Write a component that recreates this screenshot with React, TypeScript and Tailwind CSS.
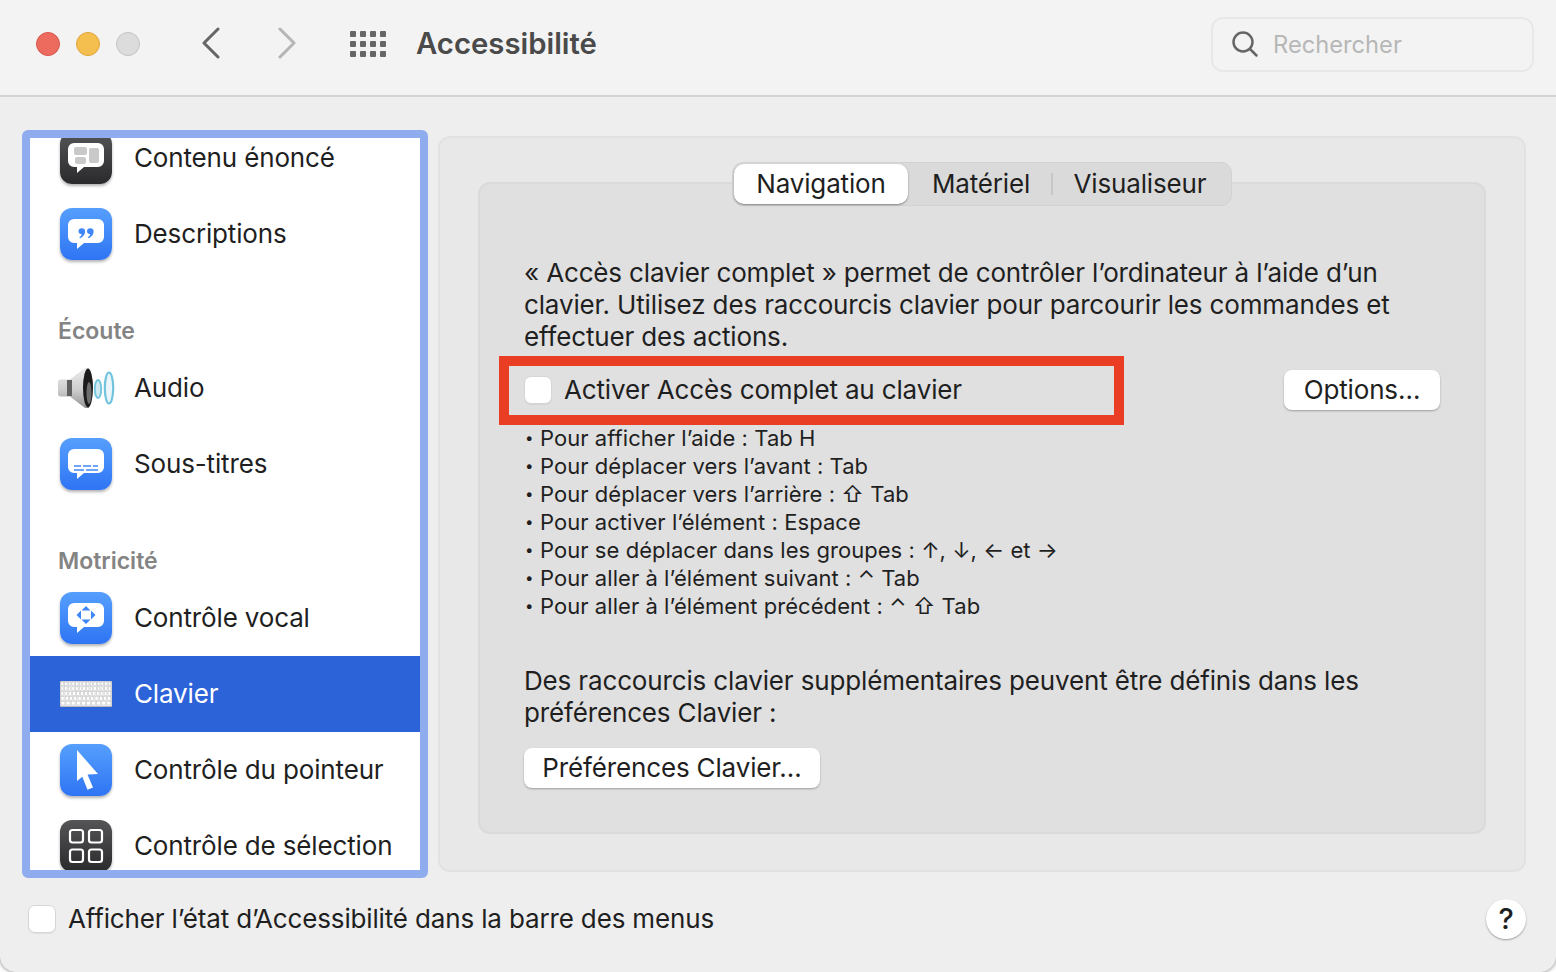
import React from 'react';

const bubble = 'M14 11h24a6 6 0 0 1 6 6v12a6 6 0 0 1-6 6H24l-7 6v-6h-3a6 6 0 0 1-6-6V17a6 6 0 0 1 6-6z';
const quote = 'M18.500 23.500a3.300 3.300 0 1 1 6.600 0c0 3-2 5.500-5 6.700l-.8-1c1.300-.8 2.200-1.800 2.500-3-1.800 0-3.300-1.200-3.300-2.700z';

const IconTile: React.FC<{ dark?: boolean; children: React.ReactNode }> = ({ dark, children }) => (
  <div
    className={
      'w-[52px] h-[52px] shrink-0 rounded-[12px] shadow-[0_2px_3px_rgba(0,0,0,0.3)] bg-linear-to-b ' +
      (dark ? 'from-[#555557] to-[#2a2a2c]' : 'from-[#569ffd] to-[#2f74f4]')
    }
  >
    <svg width="52" height="52" viewBox="0 0 52 52">
      {children}
    </svg>
  </div>
);

const ContenuIcon = () => (
  <IconTile dark>
    <path d={bubble} fill="#fff" />
    <rect x="14" y="15" width="13" height="8" rx="2" fill="#c9c9c9" />
    <rect x="15" y="25" width="11" height="7" rx="2" fill="#c9c9c9" />
    <rect x="29" y="16" width="10" height="15" rx="2" fill="#c9c9c9" />
  </IconTile>
);

const DescriptionsIcon = () => (
  <IconTile>
    <path d={bubble} fill="#fff" />
    <path d={quote} fill="#3f86f8" />
    <path d={quote} fill="#3f86f8" transform="translate(8.500 0)" />
  </IconTile>
);

const SpeakerIcon = () => (
  <svg width="58" height="44" viewBox="0 0 58 44" className="shrink-0">
    <defs>
      <linearGradient id="cone" x1="0" y1="0" x2="0" y2="1">
        <stop offset="0" stopColor="#ececec" />
        <stop offset="0.55" stopColor="#cdcdcd" />
        <stop offset="1" stopColor="#949494" />
      </linearGradient>
    </defs>
    <path d="M1 16c0-1.500 1-2.500 2.500-2.500H13L28 2h4v40h-4L13 30.500H3.500C2 30.500 1 29.500 1 28z" fill="url(#cone)" />
    <rect x="10" y="14" width="5" height="16" fill="#5f5f5f" />
    <ellipse cx="31" cy="22" rx="5" ry="19.500" fill="#1c1c1c" />
    <ellipse cx="32" cy="27" rx="2.500" ry="11" fill="#6d6d6d" />
    <ellipse cx="41" cy="23" rx="3.200" ry="9" fill="#cfeaf3" stroke="#72c4dc" strokeWidth="1.800" />
    <ellipse cx="52" cy="22" rx="4.200" ry="15.500" fill="#eaf6fa" stroke="#72c4dc" strokeWidth="2.200" />
  </svg>
);

const SousTitresIcon = () => (
  <IconTile>
    <path d={bubble} fill="#fff" />
    <path d="M14 28h7M23 28h8M33 28h5M14 32h10M26 32h12" stroke="#3f86f8" strokeWidth="1.600" />
  </IconTile>
);

const VocalIcon = () => (
  <IconTile>
    <path d={bubble} fill="#fff" />
    <path
      d="M26 14l4.500 4.500h-9zM26 32l-4.500-4.500h9zM16.500 23l4.500-4.500v9zM35.500 23L31 18.500v9z"
      fill="#3f86f8"
    />
  </IconTile>
);

const keyRows = [14, 14, 13, 12, 10];

const KeyboardIcon = () => (
  <svg width="52" height="26" viewBox="0 0 52 26" className="shrink-0">
    <rect width="52" height="26" rx="1" fill="#b9b9b9" />
    <rect x="0.500" y="0.500" width="51" height="24.500" fill="#f2f2f2" />
    {keyRows.map((count, r) => {
      const w = (51 - count) / count;
      return Array.from({ length: count }).map((_, i) => (
        <rect
          key={r + '-' + i}
          x={1 + i * (w + 1)}
          y={1 + r * 4.800}
          width={w - 0.200}
          height="3.800"
          fill="#ffffff"
          stroke="#bdbdbd"
          strokeWidth="0.500"
        />
      ));
    })}
  </svg>
);

const PointeurIcon = () => (
  <IconTile>
    <path d="M17 6l21 24-10.500.5 5.500 13-5.500 2.300-5.200-13L17 37z" fill="#fff" />
  </IconTile>
);

const SelectionIcon = () => (
  <IconTile dark>
    <g fill="none" stroke="#fff" strokeWidth="2.200">
      <rect x="10" y="10" width="13" height="12.500" rx="2.500" />
      <rect x="29" y="10" width="13" height="12.500" rx="2.500" />
      <rect x="10" y="29.500" width="13" height="12.500" rx="2.500" />
      <rect x="29" y="29.500" width="13" height="12.500" rx="2.500" />
    </g>
  </IconTile>
);

const Row: React.FC<{ icon: React.ReactNode; label: string; active?: boolean }> = ({ icon, label, active }) => (
  <div
    className={
      'h-[76px] shrink-0 flex items-center pl-[30px] gap-[22px] text-[26px] tracking-[-0.15px] ' +
      (active ? 'bg-[#2d63d9] text-white' : 'text-[#1f1f1f]')
    }
  >
    <div className="w-[52px] flex justify-center">{icon}</div>
    <span className="pb-[2px]">{label}</span>
  </div>
);

const Heading: React.FC<{ label: string }> = ({ label }) => (
  <div className="h-[78px] shrink-0 flex items-end pl-[28px] pb-[2px] text-[23px] font-semibold text-[#848484]">
    {label}
  </div>
);

const Checkbox = () => (
  <div className="w-[28px] h-[28px] shrink-0 rounded-[7px] bg-white border border-[#d6d6d6] shadow-[0_1px_1px_rgba(0,0,0,0.06)]" />
);

const MacButton: React.FC<{ label: string; className?: string }> = ({ label, className }) => (
  <div
    className={
      'h-[40px] flex items-center justify-center rounded-[8px] bg-white pb-[2px] text-[26px] tracking-[-0.15px] text-[#1f1f1f] shadow-[0_1px_2px_rgba(0,0,0,0.3)] ' +
      (className || '')
    }
  >
    {label}
  </div>
);

const shortcuts = [
  'Pour afficher l’aide : Tab H',
  'Pour déplacer vers l’avant : Tab',
  'Pour déplacer vers l’arrière : ⇧ Tab',
  'Pour activer l’élément : Espace',
  'Pour se déplacer dans les groupes : ↑, ↓, ← et →',
  'Pour aller à l’élément suivant : ⌃ Tab',
  'Pour aller à l’élément précédent : ⌃ ⇧ Tab',
];

const App: React.FC = () => {
  return (
    <div className="w-[1556px] h-[972px] bg-white">
      <div
        style={{ fontFamily: 'Inter, "DejaVu Sans", sans-serif' }}
        className="w-full h-full overflow-hidden rounded-b-[16px] bg-[#eeeeee] shadow-[0_0_4px_rgba(0,0,0,0.55)] flex flex-col"
      >
        {/* title bar */}
        <div className="h-[97px] shrink-0 bg-[#f3f3f3] border-b-2 border-[#d2d2d2] flex items-center pl-[36px] pb-[8px]">
          <div className="flex gap-[16px]">
            <div className="w-[24px] h-[24px] rounded-full bg-[#ed6a5e] border border-[#d8574c]" />
            <div className="w-[24px] h-[24px] rounded-full bg-[#f5bf4f] border border-[#dba53c]" />
            <div className="w-[24px] h-[24px] rounded-full bg-[#dcdcdc] border border-[#c4c4c4]" />
          </div>
          <svg width="20" height="32" viewBox="0 0 20 32" className="ml-[61px] -mt-[1px]" fill="none" stroke="#666" strokeWidth="3" strokeLinecap="round" strokeLinejoin="round">
            <path d="M17 2L3 16l14 14" />
          </svg>
          <svg width="20" height="32" viewBox="0 0 20 32" className="ml-[56px] -mt-[1px]" fill="none" stroke="#b5b5b5" strokeWidth="3" strokeLinecap="round" strokeLinejoin="round">
            <path d="M3 2l14 14L3 30" />
          </svg>
          <div className="ml-[53px] grid grid-cols-4 gap-x-[4px] gap-y-[4px]">
            {Array.from({ length: 12 }).map((_, i) => (
              <div key={i} className="w-[6px] h-[6px] rounded-[1px] bg-[#666666]" />
            ))}
          </div>
          <div className="ml-[30px] text-[29.300px] font-semibold text-[#4a4a4a]">Accessibilité</div>
          <div className="ml-auto mr-[22px] mt-[1px] w-[323px] h-[55px] rounded-[12px] border-2 border-[#e8e8e8] flex items-center pl-[18px] gap-[14px]">
            <svg width="28" height="28" viewBox="0 0 28 28" fill="none" stroke="#666" strokeWidth="2.500" strokeLinecap="round">
              <circle cx="12" cy="12" r="9.500" />
              <path d="M19 19l6.500 6.500" />
            </svg>
            <span className="mt-[1px] text-[23.700px] text-[#b7b7b7]">Rechercher</span>
          </div>
        </div>

        {/* main */}
        <div className="flex pl-[22px] pt-[33px] gap-[10px]">
          <div className="w-[406px] h-[748px] shrink-0 rounded-[6px] border-[8px] border-[#8fadee] bg-white overflow-hidden flex flex-col">
            <div className="-mt-[18px]" />
            <Row icon={<ContenuIcon />} label="Contenu énoncé" />
            <Row icon={<DescriptionsIcon />} label="Descriptions" />
            <Heading label="Écoute" />
            <Row icon={<SpeakerIcon />} label="Audio" />
            <Row icon={<SousTitresIcon />} label="Sous-titres" />
            <Heading label="Motricité" />
            <Row icon={<VocalIcon />} label="Contrôle vocal" />
            <Row icon={<KeyboardIcon />} label="Clavier" active />
            <Row icon={<PointeurIcon />} label="Contrôle du pointeur" />
            <Row icon={<SelectionIcon />} label="Contrôle de sélection" />
          </div>

          <div className="mt-[6px] w-[1088px] h-[736px] rounded-[12px] bg-[#e8e8e8] border-2 border-[#e2e2e2] pt-[24px] px-[38px] flex flex-col">
            <div className="relative z-10 self-center -mb-[24px] w-[500px] h-[44px] rounded-[11px] bg-[#dadada] border border-[#d2d2d2] flex items-center text-[26px] tracking-[-0.15px] text-[#1f1f1f]">
              <div className="ml-[1px] w-[174px] h-[40px] pb-[2px] rounded-[10px] bg-white shadow-[0_1px_2px_rgba(0,0,0,0.4)] flex items-center justify-center">
                Navigation
              </div>
              <div className="w-[143px] text-center pl-[3px] pb-[2px]">Matériel</div>
              <div className="w-[2px] h-[22px] bg-[#c6c6c6]" />
              <div className="flex-1 text-center pr-[4px] pb-[2px]">Visualiseur</div>
            </div>

            <div className="h-[652px] rounded-[12px] bg-[#e0e0e0] border-2 border-[#dadada] pt-[73px] pl-[44px] pr-[90px] text-[#1f1f1f] flex flex-col">
              <p className="text-[26px] tracking-[-0.15px] leading-[32px]">
                « Accès clavier complet » permet de contrôler l’ordinateur à l’aide d’un clavier. Utilisez des raccourcis clavier pour parcourir les commandes et effectuer des actions.
              </p>
              <div className="relative mt-[17px] h-[40px] flex items-center gap-[12px] text-[26px] tracking-[-0.15px] -mr-[46px]">
                <div className="absolute -left-[25px] -top-[14px] w-[625px] h-[69px] border-[10px] border-[#e93e24]" />
                <Checkbox />
                <span className="pb-[2px]">Activer Accès complet au clavier</span>
                <MacButton label="Options…" className="ml-auto w-[156px]" />
              </div>
              <ul className="mt-[14px] text-[22px] tracking-[0.05px] leading-[28px]">
                {shortcuts.map((s) => (
                  <li key={s} className="flex">
                    <span className="w-[16px] pl-[1px] text-[15px]">•</span>
                    <span>{s}</span>
                  </li>
                ))}
              </ul>
              <p className="mt-[45px] text-[26px] tracking-[-0.15px] leading-[32px]">
                Des raccourcis clavier supplémentaires peuvent être définis dans les préférences Clavier :
              </p>
              <MacButton label="Préférences Clavier…" className="mt-[19px] w-[296px]" />
            </div>
          </div>
        </div>

        {/* footer */}
        <div className="flex items-center pl-[28px] pr-[30px] mt-[21px] h-[40px] gap-[12px] text-[26px] tracking-[-0.15px] text-[#1f1f1f]">
          <Checkbox />
          <span className="pb-[2px]">Afficher l’état d’Accessibilité dans la barre des menus</span>
          <div className="ml-auto w-[40px] h-[40px] rounded-full bg-white shadow-[0_1px_2px_rgba(0,0,0,0.35)] flex items-center justify-center text-[29px] font-medium">
            ?
          </div>
        </div>
      </div>
    </div>
  );
};

export default App;
